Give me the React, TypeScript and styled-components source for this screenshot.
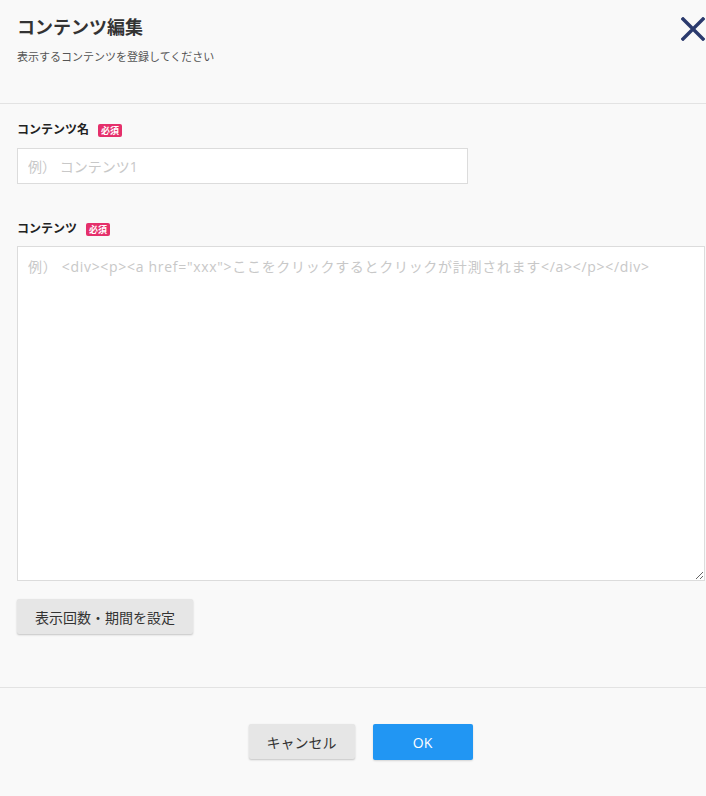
import React from 'react';
import styled, { createGlobalStyle } from 'styled-components';

const GlobalStyle = createGlobalStyle`
  html, body {
    margin: 0;
    padding: 0;
    background-color: #f9f9f9;
  }
  body {
    font-family: "Open Sans", "Noto Sans CJK JP", sans-serif;
    color: #333;
  }
  * {
    box-sizing: border-box;
  }
`;

const Dialog = styled.div`
  width: 706px;
  min-height: 796px;
  background-color: #f9f9f9;
`;

const Header = styled.header`
  display: flex;
  justify-content: space-between;
  align-items: flex-start;
  height: 104px;
  padding: 14px 1px 0 17px;
  border-bottom: 1px solid #e3e3e3;
`;

const Title = styled.h1`
  margin: 0;
  font-size: 18px;
  line-height: 26px;
  font-weight: 700;
  color: #333;
`;

const Subtitle = styled.p`
  margin: 9px 0 0;
  font-size: 11px;
  line-height: 16px;
  color: #555;
`;

const CloseButton = styled.button`
  border: none;
  background: none;
  padding: 0;
  margin-top: 3px;
  width: 24px;
  height: 24px;
  cursor: pointer;
`;

const Body = styled.section`
  padding: 18px 1px 53px 17px;
  border-bottom: 1px solid #e3e3e3;
`;

const LabelRow = styled.div<{ $top?: number }>`
  display: flex;
  align-items: center;
  gap: 9px;
  margin-top: ${(p) => p.$top ?? 0}px;
  font-size: 12px;
  line-height: 16px;
  font-weight: 700;
  color: #222;
`;

const Required = styled.span`
  display: inline-block;
  height: 13px;
  padding: 0 3px;
  font-size: 9px;
  line-height: 13px;
  font-weight: 700;
  color: #fff;
  background-color: #e5306b;
  border-radius: 2px;
`;

const TextInput = styled.input`
  display: block;
  margin-top: 10px;
  width: 451px;
  height: 36px;
  padding: 0 10px;
  border: 1px solid #dcdcdc;
  background: #fff;
  font-family: inherit;
  font-size: 14px;
  outline: none;
  &::placeholder {
    color: #c8c8c8;
  }
`;

const TextArea = styled.textarea`
  display: block;
  margin-top: 9px;
  width: 688px;
  height: 335px;
  padding: 10px 10px;
  border: 1px solid #dcdcdc;
  background: #fff;
  font-family: inherit;
  font-size: 14px;
  line-height: 20px;
  outline: none;
  &::placeholder {
    color: #c8c8c8;
    letter-spacing: 0.7px;
  }
`;

const GrayButton = styled.button<{ $top?: number }>`
  margin-top: ${(p) => p.$top ?? 0}px;
  height: 35px;
  padding: 0 18px;
  min-width: 100px;
  border: none;
  border-radius: 2px;
  background-color: #e6e6e6;
  box-shadow: 0 1px 2px rgba(0, 0, 0, 0.22);
  font-family: inherit;
  font-size: 14px;
  color: #333;
  cursor: pointer;
`;

const Footer = styled.footer`
  display: flex;
  justify-content: center;
  gap: 18px;
  padding: 36px 0 0 15px;
`;

const PrimaryButton = styled.button`
  height: 36px;
  min-width: 100px;
  border: none;
  border-radius: 2px;
  background-color: #2196f3;
  box-shadow: 0 1px 2px rgba(0, 0, 0, 0.15);
  font-family: inherit;
  font-size: 14px;
  color: #fff;
  cursor: pointer;
`;

function CloseIcon() {
  return (
    <svg width="24" height="24" viewBox="0 0 24 24">
      <path d="M2 2 L22 22 M22 2 L2 22" stroke="#2b3a6d" strokeWidth="3.4" strokeLinecap="square" />
    </svg>
  );
}

function App() {
  return (
    <Dialog>
      <GlobalStyle />
      <Header>
        <div>
          <Title>コンテンツ編集</Title>
          <Subtitle>表示するコンテンツを登録してください</Subtitle>
        </div>
        <CloseButton aria-label="閉じる">
          <CloseIcon />
        </CloseButton>
      </Header>
      <Body>
        <LabelRow>
          コンテンツ名<Required>必須</Required>
        </LabelRow>
        <TextInput placeholder="例） コンテンツ1" />
        <LabelRow $top={37}>
          コンテンツ<Required>必須</Required>
        </LabelRow>
        <TextArea placeholder={'例） <div><p><a href="xxx">ここをクリックするとクリックが計測されます</a></p></div>'} />
        <GrayButton $top={18}>表示回数・期間を設定</GrayButton>
      </Body>
      <Footer>
        <GrayButton>キャンセル</GrayButton>
        <PrimaryButton>OK</PrimaryButton>
      </Footer>
    </Dialog>
  );
}

export default App;
